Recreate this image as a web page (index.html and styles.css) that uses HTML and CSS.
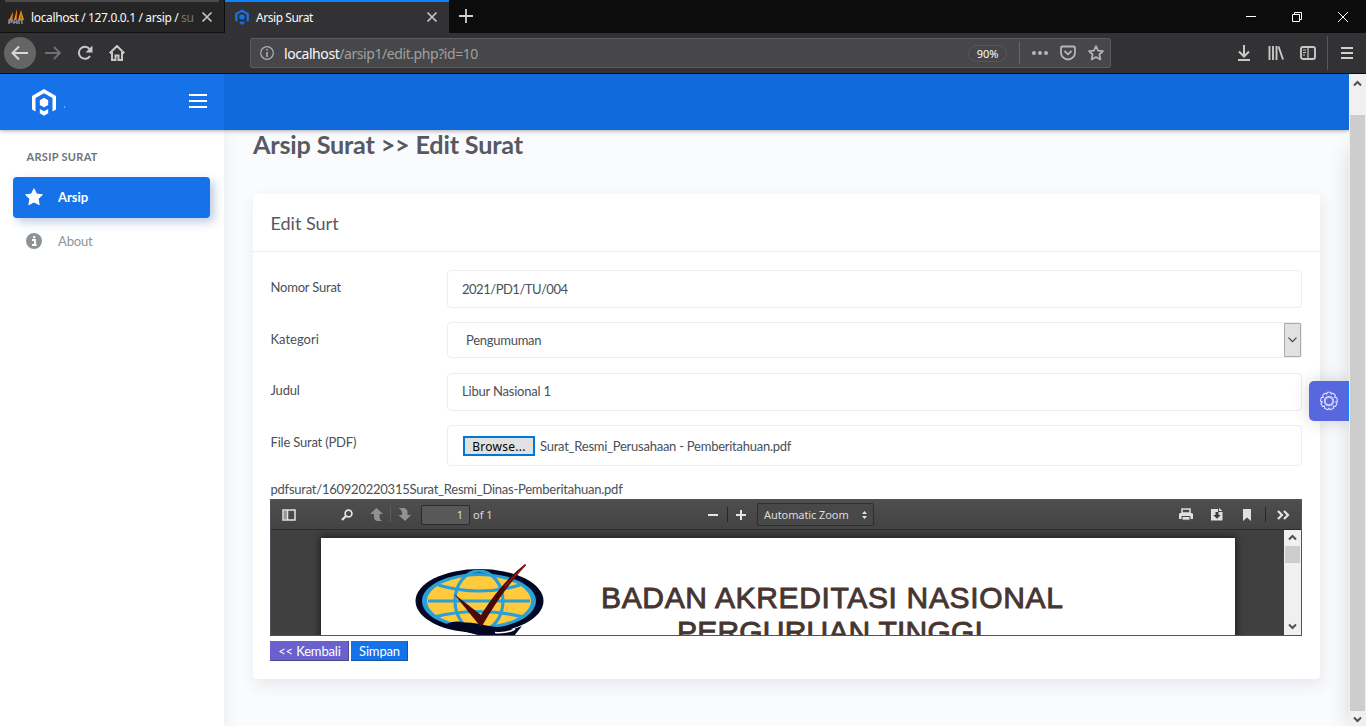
FILE: index.html
```html
<!DOCTYPE html>
<html lang="id">
<head>
<meta charset="utf-8">
<title>Arsip Surat</title>
<link rel="stylesheet" href="styles.css">
</head>
<body>
<div class="tabs">
  <div class="tab tab-idle">
    <svg class="fav" width="18" height="18" viewBox="0 0 18 18"><path d="M1 12 5 4v8zM6 12 9 1v11zM10 12 13 2l3 10z" fill="#f29111"/><path d="M5 5v7H3zM9 3v9H8zM13 5l1 7h-2z" fill="#a85a10"/><path d="M1 16v-4h3v2H1M6 12v4m0-2h3v-2m0 0v4m2-4v4m0-4h3v4" fill="none" stroke="#9090ad" stroke-width="1.4"/></svg>
    <span class="tab-text t1">localhost / 127.0.0.1 / arsip / <i>su</i></span>
    <svg class="x" width="12" height="12" viewBox="0 0 12 12"><path d="M1.500 1.500l9 9M10.500 1.500l-9 9"/></svg>
  </div>
  <div class="tab tab-active">
    <svg class="fav" width="16" height="16" viewBox="0 0 26 28"><path d="M3 21.500V8.500L13 3l10 5.500V21.500" fill="none" stroke="#1572e8" stroke-width="4"/><path d="M13 9l4.500 2.500v5L13 19l-4.500-2.500v-5zM9 21l4 2 4-2v4l-4 3-4-3z" fill="#1572e8"/></svg>
    <span class="tab-text t2">Arsip Surat</span>
    <svg class="x" width="12" height="12" viewBox="0 0 12 12"><path d="M1.500 1.500l9 9M10.500 1.500l-9 9"/></svg>
  </div>
  <svg class="plus" width="14" height="14" viewBox="0 0 14 14"><path d="M7 0v14M0 7h14" stroke="#d0d0d0" stroke-width="1.800"/></svg>
  <div class="win">
    <svg width="10" height="10" viewBox="0 0 10 10"><path d="M0 4.500h10"/></svg>
    <svg width="10" height="10" viewBox="0 0 10 10"><path d="M.5 2.500h7v7h-7zM2.500 2.500v-2h7v7h-2"/></svg>
    <svg width="10" height="10" viewBox="0 0 10 10"><path d="M0 0l10 10M10 0L0 10"/></svg>
  </div>
</div>
<div class="toolbar">
  <div class="back"><svg width="18" height="16" viewBox="0 0 18 16"><path d="M17 8H2M8 1.500L1.500 8 8 14.500" fill="none" stroke="#d8d8d8" stroke-width="2"/></svg></div>
  <svg class="fwd" width="16" height="16" viewBox="0 0 16 16"><path d="M0 8h15M9 2l6 6-6 6" fill="none" stroke="#707073" stroke-width="1.800"/></svg>
  <svg class="reload" width="16" height="16" viewBox="0 0 16 16"><path d="M13 11A6 6 0 1 1 12.500 4" fill="none" stroke="#c8c8c9" stroke-width="2"/><path d="M15.500.5v7h-7z" fill="#c8c8c9"/></svg>
  <svg class="home" width="16" height="16" viewBox="0 0 16 16"><path d="M.7 8.300L8 1l7.300 7.300M3 7v8h3.500v-4.500h3V15H13V7" fill="none" stroke="#c8c8c9" stroke-width="2"/></svg>
  <div class="url">
    <svg width="14" height="14" viewBox="0 0 14 14"><circle cx="7" cy="7" r="6.300" fill="none" stroke="#b1b1b3" stroke-width="1.200"/><path d="M7 6v5M7 3v1.600" stroke="#b1b1b3" stroke-width="1.600"/></svg>
    <span class="addr"><b>localhost</b>/arsip1/edit.php?id=10</span>
    <span class="zoom">90%</span>
    <i class="vsep"></i>
    <svg class="dots" width="16" height="16" viewBox="0 0 16 16"><g fill="#b6b6b8"><circle cx="2" cy="8" r="2"/><circle cx="8" cy="8" r="2"/><circle cx="14" cy="8" r="2"/></g></svg>
    <svg class="pocket" width="16" height="16" viewBox="0 0 16 16"><path d="M2.200 1.500h11.600a1.200 1.200 0 0 1 1.200 1.200V7.500a7 7 0 0 1-14 0V2.700a1.200 1.200 0 0 1 1.200-1.200zM4.500 6L8 9.300 11.500 6" fill="none" stroke="#b6b6b8" stroke-width="1.800"/></svg>
    <svg class="star" width="16" height="16" viewBox="0 0 16 16"><path d="M8 1.200l2.100 4.400 4.900.6-3.600 3.300 1 4.900L8 12l-4.400 2.400 1-4.900L1 6.200l4.900-.6z" fill="none" stroke="#b6b6b8" stroke-width="1.700" stroke-linejoin="round"/></svg>
  </div>
  <div class="tools">
    <svg width="16" height="16" viewBox="0 0 16 16"><path d="M8 0v11M3 6.500L8 11.500l5-5M2 15h12" fill="none" stroke="#c8c8c9" stroke-width="2"/></svg>
    <svg width="16" height="16" viewBox="0 0 16 16"><path d="M1.500 1v14M5 1v14M8.500 1v14M10.500 1.500L15 14.500" fill="none" stroke="#c8c8c9" stroke-width="1.900"/></svg>
    <svg width="16" height="16" viewBox="0 0 16 16"><rect x="1" y="2" width="14" height="12" rx="2" fill="none" stroke="#c8c8c9" stroke-width="1.900"/><path d="M8 2v12M3 5h3M3 7.500h3M3 10h2" stroke="#c8c8c9" stroke-width="1.200"/></svg>
    <i class="msep"></i>
    <svg class="menu" width="12" height="12" viewBox="0 0 12 12"><path d="M0 1h12M0 6h12M0 11h12" stroke="#d0d0d0" stroke-width="2"/></svg>
  </div>
</div>
<div class="view">
  <div class="app">
    <header class="head">
      <div class="brand">
        <svg width="26" height="28" viewBox="0 0 26 28"><path d="M1 8L13 1l12 7v13.500l-3.500 2V10L13 5.300 4.500 10v13.500L1 21.500z" fill="#fff"/><path d="M13 9.800l4.200 2.400v4.800L13 19.300l-4.200-2.300v-4.800zM8.800 21l4.200 2.300 4.200-2.300v4.300L13 27.800 8.800 25.300z" fill="#fff"/></svg>
        <i class="speck"></i>
        <svg class="burger" width="18" height="14" viewBox="0 0 18 14"><path d="M0 1h18M0 7h18M0 13h18" stroke="#fff" stroke-width="1.800"/></svg>
      </div>
    </header>
    <div class="body">
      <aside class="side">
        <div class="side-cap"><span>ARSIP SURAT</span></div>
        <a class="nav on"><svg width="18" height="18" viewBox="0 0 18 18"><path d="M9 .8l2.500 5.200 5.900.8-4.300 4 1.100 5.900L9 13.900l-5.200 2.800 1.100-5.900-4.300-4 5.900-.8z" fill="#fff" stroke="#fff" stroke-linejoin="round"/></svg><span>Arsip</span></a>
        <a class="nav"><svg width="18" height="18" viewBox="0 0 18 18"><circle cx="9" cy="9" r="8" fill="#8d9498"/><path d="M7 8h3v4.500M7 13h4.500M9.200 4v2.300" fill="none" stroke="#fff" stroke-width="2"/></svg><span>About</span></a>
      </aside>
      <main class="main">
        <h1><span>Arsip Surat &gt;&gt; Edit Surat</span></h1>
        <section class="card">
          <div class="card-head"><span>Edit Surt</span></div>
          <div class="card-body">
            <div class="row r1"><label><span class="l1">Nomor Surat</span></label><div class="field"><span class="v1">2021/PD1/TU/004</span></div></div>
            <div class="row r2"><label><span class="l2">Kategori</span></label><div class="field select"><span class="v2">Pengumuman</span><div class="drop"><svg width="9" height="6" viewBox="0 0 9 6"><path d="M.5.7l4 4 4-4" fill="none" stroke="#404040" stroke-width="1.200"/></svg></div></div></div>
            <div class="row r3"><label><span class="l3">Judul</span></label><div class="field"><span class="v3">Libur Nasional 1</span></div></div>
            <div class="row r4"><label><span class="l4">File Surat (PDF)</span></label><div class="field"><div class="browse"><span>Browse...</span></div><span class="v4">Surat_Resmi_Perusahaan - Pemberitahuan.pdf</span></div></div>
            <div class="path"><span>pdfsurat/160920220315Surat_Resmi_Dinas-Pemberitahuan.pdf</span></div>
            <div class="pdf">
              <div class="pdf-bar">
                <svg class="p-side" width="14" height="12" viewBox="0 0 14 12"><path d="M1 1h12v10H1zM5.500 1v10" fill="none" stroke="#e4e4e4" stroke-width="1.500"/><path d="M2 2h3v8H2z" fill="#999"/></svg>
                <svg class="p-find" width="12" height="12" viewBox="0 0 12 12"><circle cx="7.500" cy="4.500" r="3.400" fill="none" stroke="#e4e4e4" stroke-width="1.700"/><path d="M5 7L1 11" stroke="#e4e4e4" stroke-width="2.300"/></svg>
                <svg class="p-up" width="13" height="13" viewBox="0 0 13 13"><path d="M6.500 0L13 6H9.500v3.500q0 2 2.500 3.500H7q-3-1-3-4V6H0z" fill="#929292"/></svg>
                <i class="p-sep a"></i>
                <svg class="p-down" width="13" height="13" viewBox="0 0 13 13"><path d="M7 13L.5 7H4V5Q4 2 .5 0H6q3.500 1 3.500 4v3H13z" fill="#929292"/></svg>
                <div class="p-num"><span>1</span></div><span class="p-of">of 1</span>
                <svg class="p-minus" width="10" height="10" viewBox="0 0 10 10"><path d="M0 5h10" stroke="#e4e4e4" stroke-width="2"/></svg>
                <i class="p-sep b"></i>
                <svg class="p-plus" width="10" height="10" viewBox="0 0 10 10"><path d="M0 5h10M5 0v10" stroke="#e4e4e4" stroke-width="2"/></svg>
                <div class="p-zoom"><span>Automatic Zoom</span><svg width="5" height="8" viewBox="0 0 5 8"><path d="M0 3l2.500-3L5 3zM0 5h5L2.500 8z" fill="#e4e4e4"/></svg></div>
                <svg class="p-print" width="14" height="13" viewBox="0 0 14 13"><path d="M3 1h8v4H3z" fill="none" stroke="#e0e0e0" stroke-width="1.500"/><path d="M1 5h12l1 1v5H0V6z" fill="#e0e0e0"/><path d="M3 8.500h8v3.700H3z" fill="#e0e0e0" stroke="#444"/></svg>
                <svg class="p-save" width="12" height="13" viewBox="0 0 12 13"><path d="M0 1h7v3h4.500v8.500H0zM8 0l3.500 3H8z" fill="#e0e0e0"/><path d="M4.500 4h3v3h2.300L6 10.700 2.200 7h2.300z" fill="#3b3b3b"/></svg>
                <svg class="p-mark" width="8" height="12" viewBox="0 0 8 12"><path d="M0 0h8v12L4 8.500 0 12z" fill="#e0e0e0"/></svg>
                <i class="p-sep c"></i>
                <svg class="p-more" width="13" height="10" viewBox="0 0 13 10"><path d="M1 1l4 4-4 4M7 1l4 4-4 4" fill="none" stroke="#e4e4e4" stroke-width="2.200"/></svg>
              </div>
              <div class="pdf-view">
                <div class="paper">
                  <svg class="seal" width="140" height="80" viewBox="0 0 140 80">
                    <ellipse cx="69.500" cy="37" rx="64" ry="32" fill="#020824"/>
                    <ellipse cx="69" cy="37" rx="57" ry="28" fill="#2ba0d8"/>
                    <ellipse cx="69" cy="37" rx="52" ry="25" fill="#ffcb3d"/>
                    <g fill="none" stroke="#2ba0d8" stroke-width="3.200"><path d="M18 37h102M28 21q41 12 82 0M24 53q45-11 90 0"/><ellipse cx="69" cy="37" rx="24" ry="30"/></g>
                    <path d="M36 60Q46 56 54 58.500Q64 58 78 62L104 65 112 62 104 72H72Q50 67 36 60z" fill="#020824"/>
                    <path d="M85 68.500q12 1 20-3.500" fill="none" stroke="#fff" stroke-width="1.500"/>
                    <path d="M44 30L71 51Q91 19 115 0L116 1Q92 27 72 62H70z" fill="#4d080a"/><path d="M95 22L115.500 1" stroke="#a51616" stroke-width="1.300"/>
                  </svg>
                  <div class="letter"><span class="h-a">BADAN AKREDITASI NASIONAL</span><span class="h-b">PERGURUAN TINGGI</span></div>
                </div>
                <div class="sb small">
                  <svg width="9" height="7" viewBox="0 0 9 7"><path d="M1 5.500L4.500 2 8 5.500" fill="none" stroke="#505050" stroke-width="2"/></svg>
                  <i class="thumb"></i>
                  <svg width="9" height="7" viewBox="0 0 9 7"><path d="M1 1.500L4.500 5 8 1.500" fill="none" stroke="#505050" stroke-width="2"/></svg>
                </div>
              </div>
            </div>
            <div class="btns"><a class="btn b-back"><span>&lt;&lt; Kembali</span></a><a class="btn b-save"><span>Simpan</span></a></div>
          </div>
        </section>
      </main>
    </div>
    <div class="panel-shadow"></div>
    <div class="gear"><svg width="20" height="20" viewBox="0 0 20 20"><g fill="none" stroke="#dfe2ff"><path d="M8.300 1.200h3.400l.5 2 1.800-1.100 2.500 2.300-1 1.900 2.200.3.900 3.300-2 1 1.500 1.600-1.600 3-2.200-.4.100 2.200-3.100 1.500L10 17.200l-1.300 1.600-3.100-1.500.1-2.200-2.200.4-1.600-3 1.500-1.600-2-1 .9-3.300 2.200-.3-1-1.900L6 2.100l1.800 1.100z" stroke-width="1.100" stroke-linejoin="round"/><circle cx="10" cy="10" r="4.200" stroke-width="2.200" opacity=".8"/></g></svg></div>
  </div>
  <div class="sb big">
    <svg width="9" height="7" viewBox="0 0 9 7"><path d="M1 5.500L4.500 2 8 5.500" fill="none" stroke="#505050" stroke-width="2"/></svg>
    <i class="thumb"></i>
    <svg width="9" height="7" viewBox="0 0 9 7"><path d="M1 1.500L4.500 5 8 1.500" fill="none" stroke="#505050" stroke-width="2"/></svg>
  </div>
</div>
</body>
</html>
```
FILE: styles.css
```css
* { box-sizing: border-box; }
body { margin: 0; width: 1366px; height: 726px; overflow: hidden; display: flex; flex-direction: column; font-family: Lato, sans-serif; font-size: 13px; color: #575962; }
svg { flex: none; display: block; }
span { white-space: nowrap; }
i { font-style: normal; }

/* browser tabs */
.tabs { height: 33px; background: #0c0c0d; display: flex; flex: none; font-family: "Noto Sans", sans-serif; font-size: 12px; color: #f9f9fa; }
.tab { display: flex; align-items: center; height: 33px; padding-top: 2px; }
.tab-idle { width: 225px; background: #252526; padding-left: 8px; border-right: 1px solid #0c0c0d; border-bottom: 1px solid #111; background-image: linear-gradient(#4b4b4d, #4b4b4d); background-size: 214px 2px; background-position: 5px 0; background-repeat: no-repeat; }
.tab-active { width: 224px; background: #323234; border-top: 2px solid #0a84ff; padding: 0 0 1px 9px; }
.tab-text { flex: none; }
.t1 { width: 164px; margin-left: 5px; letter-spacing: -.36px; }
.t1 i { color: #77777a; }
.t2 { width: 170px; margin-left: 6px; letter-spacing: -.45px; }
.tab-idle .x { margin-left: 6px; }
.x path { stroke: #c6c6c7; stroke-width: 1.700; }
.plus { margin: 9px 0 0 10px; }
.win { display: flex; gap: 36px; margin: 12px 18px 0 auto; }
.win path { fill: none; stroke: #fff; stroke-width: 1; }

/* browser toolbar */
.toolbar { height: 41px; flex: none; background: #323234; border-bottom: 1px solid #0c0c0d; display: flex; align-items: center; padding-left: 4px; }
.back { width: 32px; height: 32px; border-radius: 50%; background: #656566; display: flex; align-items: center; justify-content: center; }
.fwd { margin-left: 9px; }
.reload { margin-left: 16px; }
.home { margin-left: 16px; }
.url { margin-left: 125px; width: 861px; height: 30px; background: #474749; border: 1px solid #5c5c5e; border-radius: 2px; display: flex; align-items: center; padding-left: 9px; font-family: "Noto Sans", sans-serif; }
.addr { margin-left: 10px; width: 684px; color: #a0a0a2; font-size: 14px; letter-spacing: -.43px; padding-top: 1px; }
.addr b { font-weight: 400; color: #f9f9fa; }
.zoom { width: 39px; height: 17px; border: 1px solid #58585a; border-radius: 9px; color: #f9f9fa; font-size: 11px; line-height: 16px; text-align: center; }
.vsep { width: 1px; height: 22px; background: #65656a; margin-left: 12px; }
.dots { margin-left: 12px; }
.pocket { margin-left: 12px; }
.star { margin-left: 12px; }
.tools { display: flex; align-items: center; margin-left: auto; gap: 16px; padding-right: 13px; }
.msep { width: 1px; height: 34px; background: #58585b; margin: 0 -3px 0 -5px; }

/* page viewport */
.view { display: flex; height: 652px; }
.app { width: 1349px; position: relative; overflow: hidden; display: flex; flex-direction: column; background: #f9fbfd; }
.head { height: 56px; flex: none; background: #1269db; box-shadow: 0 0 5px rgba(18, 23, 39, .5); position: relative; z-index: 2; display: flex; }
.brand { width: 224px; background: #1572e8; display: flex; align-items: center; padding-left: 31px; }
.speck { width: 1px; height: 2px; background: #73aaf1; margin: 9px 0 0 7px; }
.burger { margin: -2px 0 0 124px; }
.body { display: flex; height: 596px; }
.side { width: 224px; background: #fff; box-shadow: 4px 4px 10px rgba(69, 65, 78, .06); padding: 18px 14px 0 13px; }
.side-cap { height: 29px; padding-left: 13.500px; font-size: 11px; font-weight: 700; color: #6f7377; line-height: 18px; letter-spacing: .3px; }
.nav { height: 41px; display: flex; align-items: center; padding: 0 0 1px 12px; margin-bottom: 3px; color: #8d9498; border-radius: 4px; }
.nav svg { margin-left: -.5px; }
.nav span { margin-left: 15.500px; letter-spacing: -.15px; }
.nav.on { background: #1572e8; color: #fff; font-weight: 700; box-shadow: 4px 4px 10px rgba(21, 70, 150, .28); }
.nav.on span { letter-spacing: 0; }
.main { width: 1125px; padding: 0 29px; }
h1 { margin: 0; height: 64px; font-size: 25.200px; line-height: 28px; font-weight: 700; letter-spacing: -.18px; }
.card { width: 1067px; height: 485px; background: #fff; border-radius: 4px; box-shadow: 2px 6px 15px rgba(69, 65, 78, .1); }
.card-head { height: 58px; border-bottom: 1px solid #ebecec; padding-left: 17.500px; font-size: 18px; line-height: 59px; }
.card-body { padding: 18px 18px 0 17px; color: #495057; }
.row { display: flex; }
.row label { width: 177px; line-height: 20px; padding: 7px 0 0 .5px; flex: none; letter-spacing: -.2px; }
.row .l2 { letter-spacing: 0; }
.field { width: 855px; border: 1px solid #ebedf2; border-radius: 4px; display: flex; align-items: center; padding-left: 14px; background: #fff; }
.r1 { height: 38px; margin-bottom: 14px; }
.r2 { height: 36px; margin-bottom: 15px; }
.r3 { height: 38px; margin-bottom: 14px; }
.r3 .field { padding-bottom: 2px; }
.r4 { height: 41px; margin-bottom: 13px; }
.v1 { letter-spacing: -.48px; }
.v2 { margin-left: 4px; letter-spacing: -.27px; }
.v3 { letter-spacing: -.2px; }
.v4 { letter-spacing: -.25px; }
.select { padding-right: 0; }
.drop { margin-left: auto; width: 17px; height: 34px; background: #e1e1e1; border: 1px solid #adadad; display: flex; align-items: center; justify-content: center; }
.browse { width: 72px; height: 20px; border: 2px solid #0078d7; background: #e1e1e1; color: #000; font-size: 12px; font-family: "Noto Sans", sans-serif; line-height: 17px; text-align: center; margin: 1px 5px 0 1px; letter-spacing: .25px; }
.path { height: 20px; line-height: 20px; padding-left: .5px; letter-spacing: -.24px; }

/* pdf viewer */
.pdf { width: 1032px; height: 137px; border: 1px solid #55515c; background: #404040; display: flex; flex-direction: column; overflow: hidden; }
.pdf-bar { height: 30px; flex: none; background: linear-gradient(#4e4e4e, #434343); border-bottom: 1px solid #2b2b2b; display: flex; align-items: center; padding-left: 11px; color: #dcdcdc; font-family: "Noto Sans", sans-serif; font-size: 11px; }
.pdf-bar > * { flex: none; }
.p-find { margin-left: 45px; }
.p-up { margin-left: 17px; }
.p-sep { width: 1px; height: 15px; background: #262626; }
.p-sep.a { margin-left: 7px; background: #5c5c5c; }
.p-down { margin-left: 7px; }
.p-num { width: 49px; height: 20px; margin-left: 10px; border: 1px solid #2b2b2b; border-radius: 2px; background: #585858; text-align: right; padding-right: 6px; line-height: 18px; }
.p-of { margin-left: 3px; width: 20px; }
.p-minus { margin-left: 215px; }
.p-sep.b { margin-left: 9px; }
.p-plus { margin-left: 8px; }
.p-zoom { width: 117px; height: 23px; margin-left: 11px; border: 1px solid #2e2e2e; border-radius: 2px; background: #484848; display: flex; align-items: center; justify-content: space-between; padding: 0 6px; letter-spacing: -.08px; }
.p-print { margin-left: 305px; }
.p-save { margin-left: 18px; }
.p-mark { margin-left: 20px; }
.p-sep.c { margin-left: 14px; }
.p-more { margin-left: 11px; }
.pdf-view { height: 105px; display: flex; padding-left: 50px; overflow: hidden; }
.paper { width: 914px; height: 120px; margin-top: 8px; background: #fff; box-shadow: 0 0 7px 1px #1b1b1b; display: flex; padding-left: 89px; }
.seal { margin-top: 26px; }
.letter { color: #463531; font-family: "Liberation Sans", sans-serif; font-size: 30px; line-height: 34px; -webkit-text-stroke: .9px #463531; margin: 43px 0 0 51px; display: flex; flex-direction: column; }
.h-a { letter-spacing: .65px; }
.h-b { margin-left: 76px; letter-spacing: .2px; }
.sb { width: 17px; background: #f0f0f0; display: flex; flex-direction: column; align-items: center; flex: none; }
.thumb { background: #cdcdcd; width: 15px; }
.small { margin-left: auto; padding: 4px 0 5px; }
.small .thumb { height: 17px; margin: 5px 0 auto; }
.big { padding: 6px 0 3px; }
.big .thumb { height: 596px; margin: 28px 0 auto; }
.btns { display: flex; gap: 2px; margin-top: 5px; }
.btn { height: 20px; color: #fff; line-height: 20px; text-align: center; border-right: 1px solid #4d4790; border-bottom: 1px solid #4d4790; background: #6861ce; letter-spacing: -.15px; padding-left: 1px; }
.b-back { width: 79px; }
.b-save { width: 57px; background: #1572e8; border-color: #1255ab; }

/* floating settings tab */
.panel-shadow { position: absolute; left: 1349px; top: 76px; width: 20px; height: 575px; box-shadow: 0 0 20px rgba(69, 65, 78, .2); }
.gear { position: absolute; right: 0; top: 307px; width: 40px; height: 40px; background: #5867dd; border-right: 1px solid #1284ff; border-radius: 5px 0 0 5px; display: flex; align-items: center; justify-content: center; box-shadow: 0 0 16px rgba(69, 65, 78, .22); }
```
